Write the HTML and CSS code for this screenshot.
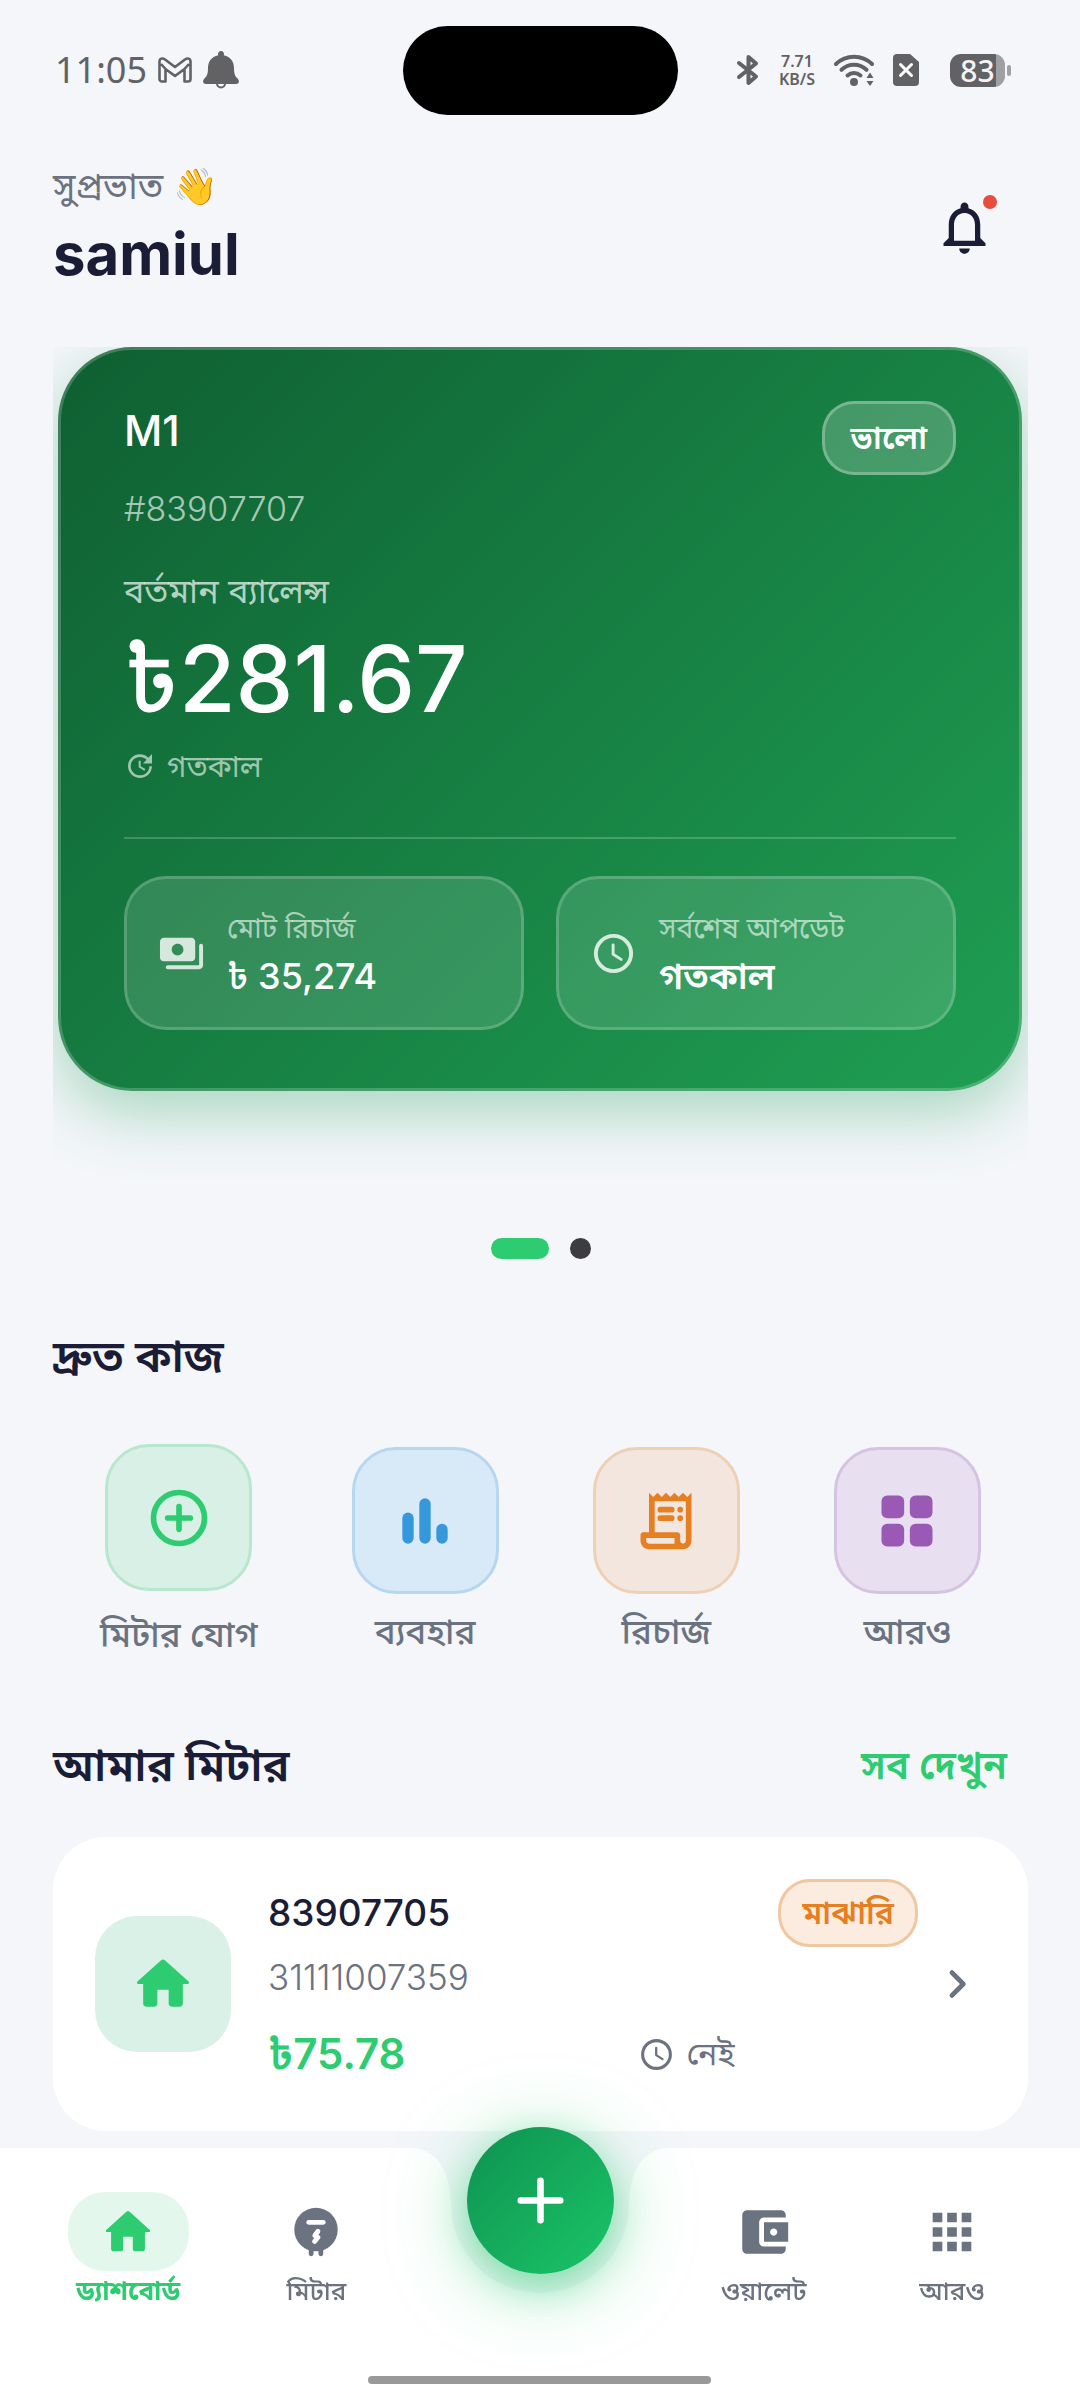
FILE: index.html
```html
<!DOCTYPE html>
<html lang="bn">
<head>
<meta charset="utf-8">
<meta name="viewport" content="width=device-width, initial-scale=1">
<title>ড্যাশবোর্ড</title>
<link rel="stylesheet" href="styles.css">
</head>
<body>
<svg class="sprite" aria-hidden="true">
  <symbol id="home" viewBox="0 0 24 24"><path d="M10 19v-5h4v5c0 .55.45 1 1 1h3c.55 0 1-.45 1-1v-7h1.7c.46 0 .68-.57.33-.87L12.67 3.6c-.38-.34-.96-.34-1.34 0l-8.36 7.53c-.34.3-.13.87.33.87H5v7c0 .55.45 1 1 1h3c.55 0 1-.45 1-1z"/></symbol>
  <symbol id="clock" viewBox="0 0 24 24"><circle cx="12" cy="12" r="9" fill="none" stroke="currentColor" stroke-width="2"/><path d="M11.8 7.7v4.7l4.1 2.6" fill="none" stroke="currentColor" stroke-width="1.5" stroke-linecap="round" stroke-linejoin="round"/></symbol>
</svg>

<header class="status">
  <div class="status__left">
    <span class="status__time">11:05</span>
    <svg class="status__gmail" viewBox="0 0 34 26"><path d="M1.500 22V4.500C1.500 1.500 4.500.500 7 2.500L17 10 27 2.500c2.500-2 5.500-1 5.500 2V22c0 1.500-1 2.500-2.500 2.500h-3.500V12L17 19 7.500 12v12.500H4c-1.500 0-2.500-1-2.500-2.500zM7.500 12L3 7M26.500 12L31 7" fill="none" stroke="currentColor" stroke-width="2.600" stroke-linejoin="round"/></svg>
    <svg class="status__bell" viewBox="0 0 36 38"><path d="M18 0a3 3 0 0 1 2.700 4.300C28 6 31 11 31 17c0 6 1 8 3.500 10.500 2.500 2.500 1.500 5.500-1.500 5.500H3c-3 0-4-3-1.500-5.500C4 25 5 23 5 17 5 11 8 6 15.300 4.300A3 3 0 0 1 18 0z" fill="currentColor"/><path d="M14 32.500a4 4 0 0 0 8 0" fill="none" stroke="currentColor" stroke-width="2"/></svg>
  </div>
  <div class="status__island"></div>
  <div class="status__right">
    <svg class="status__bt" viewBox="0 0 24 32"><path d="M3 9l17 13.500L12.500 29V3L20 9.500 3 23" fill="none" stroke="currentColor" stroke-width="4" stroke-linecap="round" stroke-linejoin="round"/></svg>
    <span class="status__speed"><span>7.71</span><span>KB/S</span></span>
    <svg class="status__wifi" viewBox="0 0 40 32"><g fill="none" stroke="currentColor" stroke-width="4" stroke-linecap="round"><path d="M2 10a26 26 0 0 1 36 0"/><path d="M7.500 15.800a18 18 0 0 1 25 0"/><path d="M13.500 21.500a10 10 0 0 1 13 0"/></g><circle cx="20" cy="28" r="4" fill="currentColor"/><path d="M36 18.500l3.500 5.500h-7zM36 32l3.500-5h-7z" fill="currentColor"/></svg>
    <svg class="status__sim" viewBox="0 0 26 32"><path d="M4 0h13l9 8v20a4 4 0 0 1-4 4H4a4 4 0 0 1-4-4V4a4 4 0 0 1 4-4z" fill="currentColor"/><path d="M7.500 10.500l11 11m0-11l-11 11" stroke="#fff" stroke-width="3" stroke-linecap="round"/></svg>
    <span class="battery"><span class="battery__level">83</span></span>
  </div>
</header>

<main class="page">
  <section class="hello">
    <div>
      <p class="hello__greet">সুপ্রভাত 👋</p>
      <h1 class="hello__name">samiul</h1>
    </div>
    <button class="hello__bell" type="button" aria-label="বিজ্ঞপ্তি">
      <svg viewBox="0 0 24 24"><path d="M12 22c1.1 0 2-.9 2-2h-4c0 1.100.9 2 2 2zm6-6v-5c0-3.070-1.630-5.640-4.500-6.320V4c0-.83-.67-1.500-1.500-1.500s-1.500.67-1.500 1.500v.68C7.640 5.360 6 7.920 6 11v5l-2 2v1h16v-1l-2-2zm-2 1H8v-6c0-2.480 1.510-4.500 4-4.500s4 2.020 4 4.500v6z"/></svg>
      <span class="hello__dot"></span>
    </button>
  </section>

  <section class="carousel">
    <article class="balance">
      <div class="balance__top">
        <div>
          <h2 class="balance__name">M1</h2>
          <p class="balance__id">#83907707</p>
        </div>
        <span class="badge badge--glass">ভালো</span>
      </div>
      <p class="balance__label">বর্তমান ব্যালেন্স</p>
      <p class="balance__amount">৳281.67</p>
      <p class="balance__when">
        <svg viewBox="0 0 24 24"><path d="M21 10.120h-6.780l2.740-2.820c-2.730-2.700-7.150-2.800-9.880-.1-2.730 2.710-2.730 7.080 0 9.790s7.150 2.710 9.880 0C18.320 15.650 19 14.080 19 12.100h2c0 1.980-.88 4.550-2.640 6.290-3.510 3.480-9.210 3.480-12.720 0-3.500-3.470-3.530-9.110-.02-12.580s9.140-3.470 12.650 0L21 3v7.120zM12.500 8v4.250l3.500 2.080-.72 1.210L11 13V8h1.500z"/></svg>
        গতকাল
      </p>
      <div class="stats">
        <div class="stat">
          <svg viewBox="0 0 24 24"><path d="M19 14V6c0-1.100-.9-2-2-2H3c-1.100 0-2 .9-2 2v8c0 1.100.9 2 2 2h14c1.100 0 2-.9 2-2zm-9-1c-1.660 0-3-1.340-3-3s1.340-3 3-3 3 1.340 3 3-1.340 3-3 3zm13-5v10c0 1.100-.9 2-2 2H5c-.55 0-1-.45-1-1s.45-1 1-1h16V8c0-.55.45-1 1-1s1 .45 1 1z"/></svg>
          <div><p class="stat__label">মোট রিচার্জ</p><p class="stat__value">৳ 35,274</p></div>
        </div>
        <div class="stat">
          <svg><use href="#clock"/></svg>
          <div><p class="stat__label">সর্বশেষ আপডেট</p><p class="stat__value stat__value--word">গতকাল</p></div>
        </div>
      </div>
    </article>
  </section>
  <div class="dots"><span class="dots__item dots__item--on"></span><span class="dots__item"></span></div>

  <section class="section">
    <h2 class="section__title">দ্রুত কাজ</h2>
    <div class="quick">
      <button class="quick__item quick__item--tall green" type="button">
        <span class="quick__tile"><svg viewBox="0 0 24 24"><circle cx="12" cy="12" r="9" fill="none" stroke="currentColor" stroke-width="2"/><path d="M12 8v8M8 12h8" stroke="currentColor" stroke-width="2" stroke-linecap="round"/></svg></span>
        <span class="quick__label">মিটার যোগ</span>
      </button>
      <button class="quick__item blue" type="button">
        <span class="quick__tile"><svg viewBox="0 0 24 24"><rect x="4" y="9" width="4" height="11" rx="2"/><rect x="10" y="4" width="4" height="16" rx="2"/><rect x="16" y="13" width="4" height="7" rx="2"/></svg></span>
        <span class="quick__label">ব্যবহার</span>
      </button>
      <button class="quick__item orange" type="button">
        <span class="quick__tile"><svg viewBox="0 0 24 24"><path d="M19.500 3.500L18 2l-1.500 1.500L15 2l-1.500 1.500L12 2l-1.500 1.500L9 2 7.500 3.500 6 2v14H4c-.55 0-1 .45-1 1v2c0 1.660 1.340 3 3 3h12c1.660 0 3-1.340 3-3V2l-1.500 1.500zM15 20H6c-.55 0-1-.45-1-1v-1h10v2zm4-1c0 .55-.45 1-1 1s-1-.45-1-1v-2c0-.55-.45-1-1-1H8V5h11v14z"/><path d="M10 8h4M10 11h4M17 8h.01M17 11h.01" stroke="currentColor" stroke-width="2" stroke-linecap="round"/></svg></span>
        <span class="quick__label">রিচার্জ</span>
      </button>
      <button class="quick__item purple" type="button">
        <span class="quick__tile"><svg viewBox="0 0 24 24"><rect x="3" y="3" width="8" height="8" rx="2"/><rect x="13" y="3" width="8" height="8" rx="2"/><rect x="3" y="13" width="8" height="8" rx="2"/><rect x="13" y="13" width="8" height="8" rx="2"/></svg></span>
        <span class="quick__label">আরও</span>
      </button>
    </div>
  </section>

  <section class="section section--meters">
    <div class="section__head">
      <h2 class="section__title">আমার মিটার</h2>
      <a class="section__link" href="#meters">সব দেখুন</a>
    </div>
    <article class="meter" id="meters">
      <span class="meter__tile"><svg><use href="#home"/></svg></span>
      <div class="meter__body">
        <div class="meter__row">
          <h3 class="meter__name">83907705</h3>
          <span class="badge badge--orange">মাঝারি</span>
        </div>
        <p class="meter__id">31111007359</p>
        <div class="meter__foot">
          <span class="meter__amount">৳75.78</span>
          <span class="meter__when"><svg><use href="#clock"/></svg>নেই</span>
        </div>
      </div>
      <svg class="meter__go" viewBox="0 0 24 24"><path d="M9.500 7.300L14.200 12l-4.700 4.700" fill="none" stroke="currentColor" stroke-width="2" stroke-linecap="round" stroke-linejoin="round"/></svg>
    </article>
  </section>
</main>

<nav class="nav">
  <div class="nav__surface">
    <span></span>
    <svg viewBox="0 0 262 252"><path d="M0 0C28 0 41 22 42 56A89 89 0 0 0 220 56C221 22 234 0 262 0V252H0z" fill="#fff"/></svg>
    <span></span>
  </div>
  <button class="nav__fab" type="button" aria-label="যোগ করুন"><svg viewBox="0 0 24 24"><path d="M12 6v12M6 12h12" stroke="currentColor" stroke-width="2" stroke-linecap="round"/></svg></button>
  <div class="nav__items">
    <a class="nav__item nav__item--on" href="#home-tab"><span class="nav__icon"><svg><use href="#home"/></svg></span>ড্যাশবোর্ড</a>
    <a class="nav__item" href="#meter-tab"><span class="nav__icon"><svg viewBox="0 0 24 24"><circle cx="12" cy="11" r="9"/><path d="M10 19v2M14 19v2" stroke="currentColor" stroke-width="2" stroke-linecap="round"/><path d="M9 8h6" stroke="#fff" stroke-width="2" stroke-linecap="round"/><path d="M12.800 11.700l-1.300 1.800 1.300.7-1.400 1.700" fill="none" stroke="#fff" stroke-width="2" stroke-linecap="round" stroke-linejoin="round"/></svg></span>মিটার</a>
    <span></span>
    <a class="nav__item" href="#wallet-tab"><span class="nav__icon"><svg viewBox="0 0 24 24"><path d="M21 18v1c0 1.100-.9 2-2 2H5c-1.110 0-2-.9-2-2V5c0-1.100.89-2 2-2h14c1.100 0 2 .9 2 2v1h-9c-1.110 0-2 .9-2 2v8c0 1.100.89 2 2 2h9zm-9-2h10V8H12v8zm4-2.500c-.83 0-1.500-.67-1.500-1.500s.67-1.500 1.500-1.500 1.500.67 1.500 1.500-.67 1.500-1.500 1.500z"/></svg></span>ওয়ালেট</a>
    <a class="nav__item" href="#more-tab"><span class="nav__icon"><svg viewBox="0 0 24 24"><path d="M4 4h4v4H4zM10 4h4v4h-4zM16 4h4v4h-4zM4 10h4v4H4zM10 10h4v4h-4zM16 10h4v4h-4zM4 16h4v4H4zM10 16h4v4h-4zM16 16h4v4h-4z"/></svg></span>আরও</a>
  </div>
  <div class="nav__handle"></div>
</nav>
</body>
</html>
```

FILE: styles.css
```css
:root {
  --bg: #f4f6fa;
  --ink: #1a1d35;
  --muted: #6b7280;
  --green: #2ecc71;
}

* { box-sizing: border-box; }

body {
  margin: 0;
  min-height: 100vh;
  background: var(--bg);
  color: var(--ink);
  font-family: Inter, "Noto Sans Bengali", "Noto Sans", sans-serif;
}

h1, h2, h3, p { margin: 0; font-weight: 600; }
p { font-weight: 400; }
button { border: 0; padding: 0; background: none; font: inherit; color: inherit; }
a { color: inherit; text-decoration: none; }
svg { display: block; fill: currentColor; flex: none; }
.sprite { position: absolute; width: 0; height: 0; }

/* System status bar */
.status {
  display: grid;
  grid-template-columns: 1fr 275px 1fr;
  align-items: center;
  height: 140px;
  padding: 0 55px;
  color: #626264;
}
.status__left, .status__right { display: flex; align-items: center; }
.status__left { gap: 11px; }
.status__right { justify-content: flex-end; gap: 19px; padding-right: 20px; }
.status__time { font: 400 36px/40px "Noto Sans", sans-serif; }
.status__gmail { width: 34px; height: 26px; }
.status__bell { width: 36px; height: 38px; }
.status__island { height: 89px; border-radius: 45px; background: #000; }
.status__bt { width: 24px; height: 32px; }
.status__speed { display: grid; gap: 2px; font: 600 16px/16px "Noto Sans", sans-serif; text-align: center; }
.status__wifi { width: 40px; height: 32px; }
.status__sim { width: 26px; height: 32px; margin-right: 12px; }
.battery {
  position: relative;
  width: 55px;
  height: 33px;
  border-radius: 11px;
  background: linear-gradient(90deg, #626264 83%, #a0a0a3 83%);
}
.battery::after {
  content: "";
  position: absolute;
  left: 57px;
  top: 11px;
  width: 4px;
  height: 11px;
  border-radius: 2px;
  background: #a0a0a3;
}
.battery__level { display: block; font: 500 30px/33px "Noto Sans", sans-serif; text-align: center; color: #f4f4f6; }

.page { padding: 0 52px 268px 53px; }

/* Greeting */
.hello { display: flex; justify-content: space-between; align-items: center; height: 207px; padding: 0 32px 38px 0; }
.hello__greet { margin-bottom: 6px; font-size: 36px; line-height: 52px; color: var(--muted); }
.hello__name { font-size: 58px; line-height: 72px; font-weight: 700; }
.hello__bell { position: relative; width: 63px; height: 63px; margin-top: 6px; }
.hello__bell svg { width: 63px; height: 63px; }
.hello__dot { position: absolute; top: -1px; right: -1px; width: 14px; height: 14px; border-radius: 50%; background: #e74c3c; }

/* Balance carousel */
.carousel { overflow: hidden; padding: 0 6px 130px 5px; }
.balance {
  padding: 51px 63px 58px;
  border: 3px solid rgba(255, 255, 255, .2);
  border-radius: 74px;
  background: linear-gradient(135deg, #0f5f32, #15793f 40%, #1f9f53) border-box;
  box-shadow: 0 21px 63px rgba(31, 159, 83, .36);
  color: #fff;
}
.balance__top { display: flex; justify-content: space-between; align-items: flex-start; }
.balance__name { font-size: 42px; line-height: 60px; font-weight: 500; }
.balance__id { margin-top: 23px; font-size: 34px; line-height: 50px; font-weight: 300; color: rgba(255, 255, 255, .65); }
.balance__label { margin-top: 32px; font-size: 34px; line-height: 50px; color: rgba(255, 255, 255, .7); }
.balance__amount { margin-top: 3px; font-size: 92px; line-height: 120px; font-weight: 500; }
.balance__when { display: flex; align-items: center; gap: 11px; margin-top: 2px; font-size: 30px; line-height: 50px; color: rgba(255, 255, 255, .6); }
.balance__when svg { width: 32px; height: 32px; }
.stats { display: grid; grid-template-columns: 1fr 1fr; gap: 32px; margin-top: 46px; padding-top: 37px; border-top: 2px solid rgba(255, 255, 255, .2); }
.stat { display: flex; align-items: center; gap: 22px; height: 154px; padding: 0 31px; border: 3px solid rgba(255, 255, 255, .18); border-radius: 42px; background: rgba(255, 255, 255, .13); }
.stat svg { width: 47px; height: 47px; color: rgba(255, 255, 255, .8); }
.stat__label { font-size: 28px; line-height: 46px; color: rgba(255, 255, 255, .6); }
.stat__value { font-size: 36px; line-height: 50px; font-weight: 500; }
.stat__value--word { font-weight: 600; }

.badge { border: 3px solid; text-align: center; font-weight: 600; }
.badge--glass { padding: 0 26px; border-color: rgba(255, 255, 255, .28); border-radius: 32px; background: rgba(255, 255, 255, .2); font-size: 32px; line-height: 68px; }
.badge--orange { padding: 0 21px; border-color: #efc7a1; border-radius: 32px; background: #fbecdf; color: #e67e22; font-size: 32px; line-height: 62px; }

.dots { display: flex; justify-content: center; gap: 21px; margin-top: 17px; }
.dots__item { width: 21px; height: 21px; border-radius: 11px; background: #3d3d40; }
.dots__item--on { width: 58px; background: var(--green); }

/* Sections */
.section { margin-top: 64px; }
.section--meters { margin-top: 73px; }
.section__head { display: flex; justify-content: space-between; align-items: center; padding-right: 21px; }
.section__title { font-size: 45px; line-height: 66px; }
.section__link { color: var(--green); font-size: 39px; line-height: 66px; font-weight: 600; }

.quick { display: flex; justify-content: space-around; align-items: center; margin-top: 55px; }
.quick__item { display: flex; flex-direction: column; align-items: center; gap: 12px; }
.quick__item--tall { gap: 18px; }
.quick__tile { display: grid; place-items: center; width: 147px; height: 147px; border: 3px solid; border-radius: 44px; }
.quick__tile svg { width: 68px; height: 68px; }
.quick__label { font-size: 35px; line-height: 50px; font-weight: 500; color: var(--muted); }
.green .quick__tile { color: #2ecc71; background: #d9f0e6; border-color: #b7e8cd; }
.blue .quick__tile { color: #3498db; background: #d8e9f7; border-color: #b6d7f0; }
.orange .quick__tile { color: #e67e22; background: #f3e6de; border-color: #f0d0b5; }
.purple .quick__tile { color: #9b59b6; background: #e8dff0; border-color: #d6c3e2; }

/* Meter card */
.meter { display: flex; align-items: center; height: 294px; margin-top: 39px; padding: 0 41px 0 42px; border-radius: 53px; background: #fff; }
.meter__tile { display: grid; place-items: center; flex: none; width: 136px; height: 136px; border-radius: 42px; background: #daf1e7; color: var(--green); }
.meter__tile svg { width: 68px; height: 68px; }
.meter__body { flex: 1; margin-left: 37px; padding-bottom: 2px; }
.meter__row { display: flex; justify-content: space-between; align-items: center; }
.meter__name { font-size: 37px; line-height: 68px; font-weight: 500; }
.meter__id { font-size: 35px; line-height: 60px; font-weight: 300; color: var(--muted); }
.meter__foot { display: grid; grid-template-columns: 369fr 280fr; align-items: center; margin-top: 14px; line-height: 66px; }
.meter__amount { color: var(--green); font-size: 42px; font-weight: 600; }
.meter__when { display: flex; align-items: center; gap: 12px; color: var(--muted); font-size: 32px; }
.meter__when svg { width: 37px; height: 37px; }
.meter__go { width: 58px; height: 58px; margin-left: 11px; color: var(--muted); }

/* Bottom navigation */
.nav { position: fixed; left: 0; right: 0; bottom: 0; height: 252px; }
.nav__surface { position: absolute; inset: 0; display: grid; grid-template-columns: 1fr 262px 1fr; }
.nav__surface span { background: #fff; }
.nav__surface svg { width: 262px; height: 252px; }
.nav__fab {
  position: absolute;
  left: calc(50% - 73px);
  top: -21px;
  display: grid;
  place-items: center;
  width: 147px;
  height: 147px;
  border-radius: 50%;
  background: linear-gradient(135deg, #0f9150, #1ac568);
  box-shadow: 0 12px 84px rgba(46, 204, 113, .4), 0 12px 36px rgba(46, 204, 113, .45);
  color: #fff;
}
.nav__fab svg { width: 79px; height: 79px; }
.nav__items { position: relative; display: grid; grid-template-columns: 1fr 1fr 259px 1fr 1fr; padding: 44px 34px 0; pointer-events: none; }
.nav__item { display: flex; flex-direction: column; align-items: center; color: var(--muted); font-size: 26px; line-height: 40px; font-weight: 500; pointer-events: auto; }
.nav__item--on { color: var(--green); font-weight: 700; }
.nav__icon { display: grid; place-items: center; width: 121px; height: 79px; border-radius: 37px; }
.nav__item--on .nav__icon { background: #e3f7ec; }
.nav__icon svg { width: 58px; height: 58px; }
.nav__handle { position: absolute; left: calc(50% - 172px); bottom: 16px; width: 343px; height: 8px; border-radius: 4px; background: #999; }
```
